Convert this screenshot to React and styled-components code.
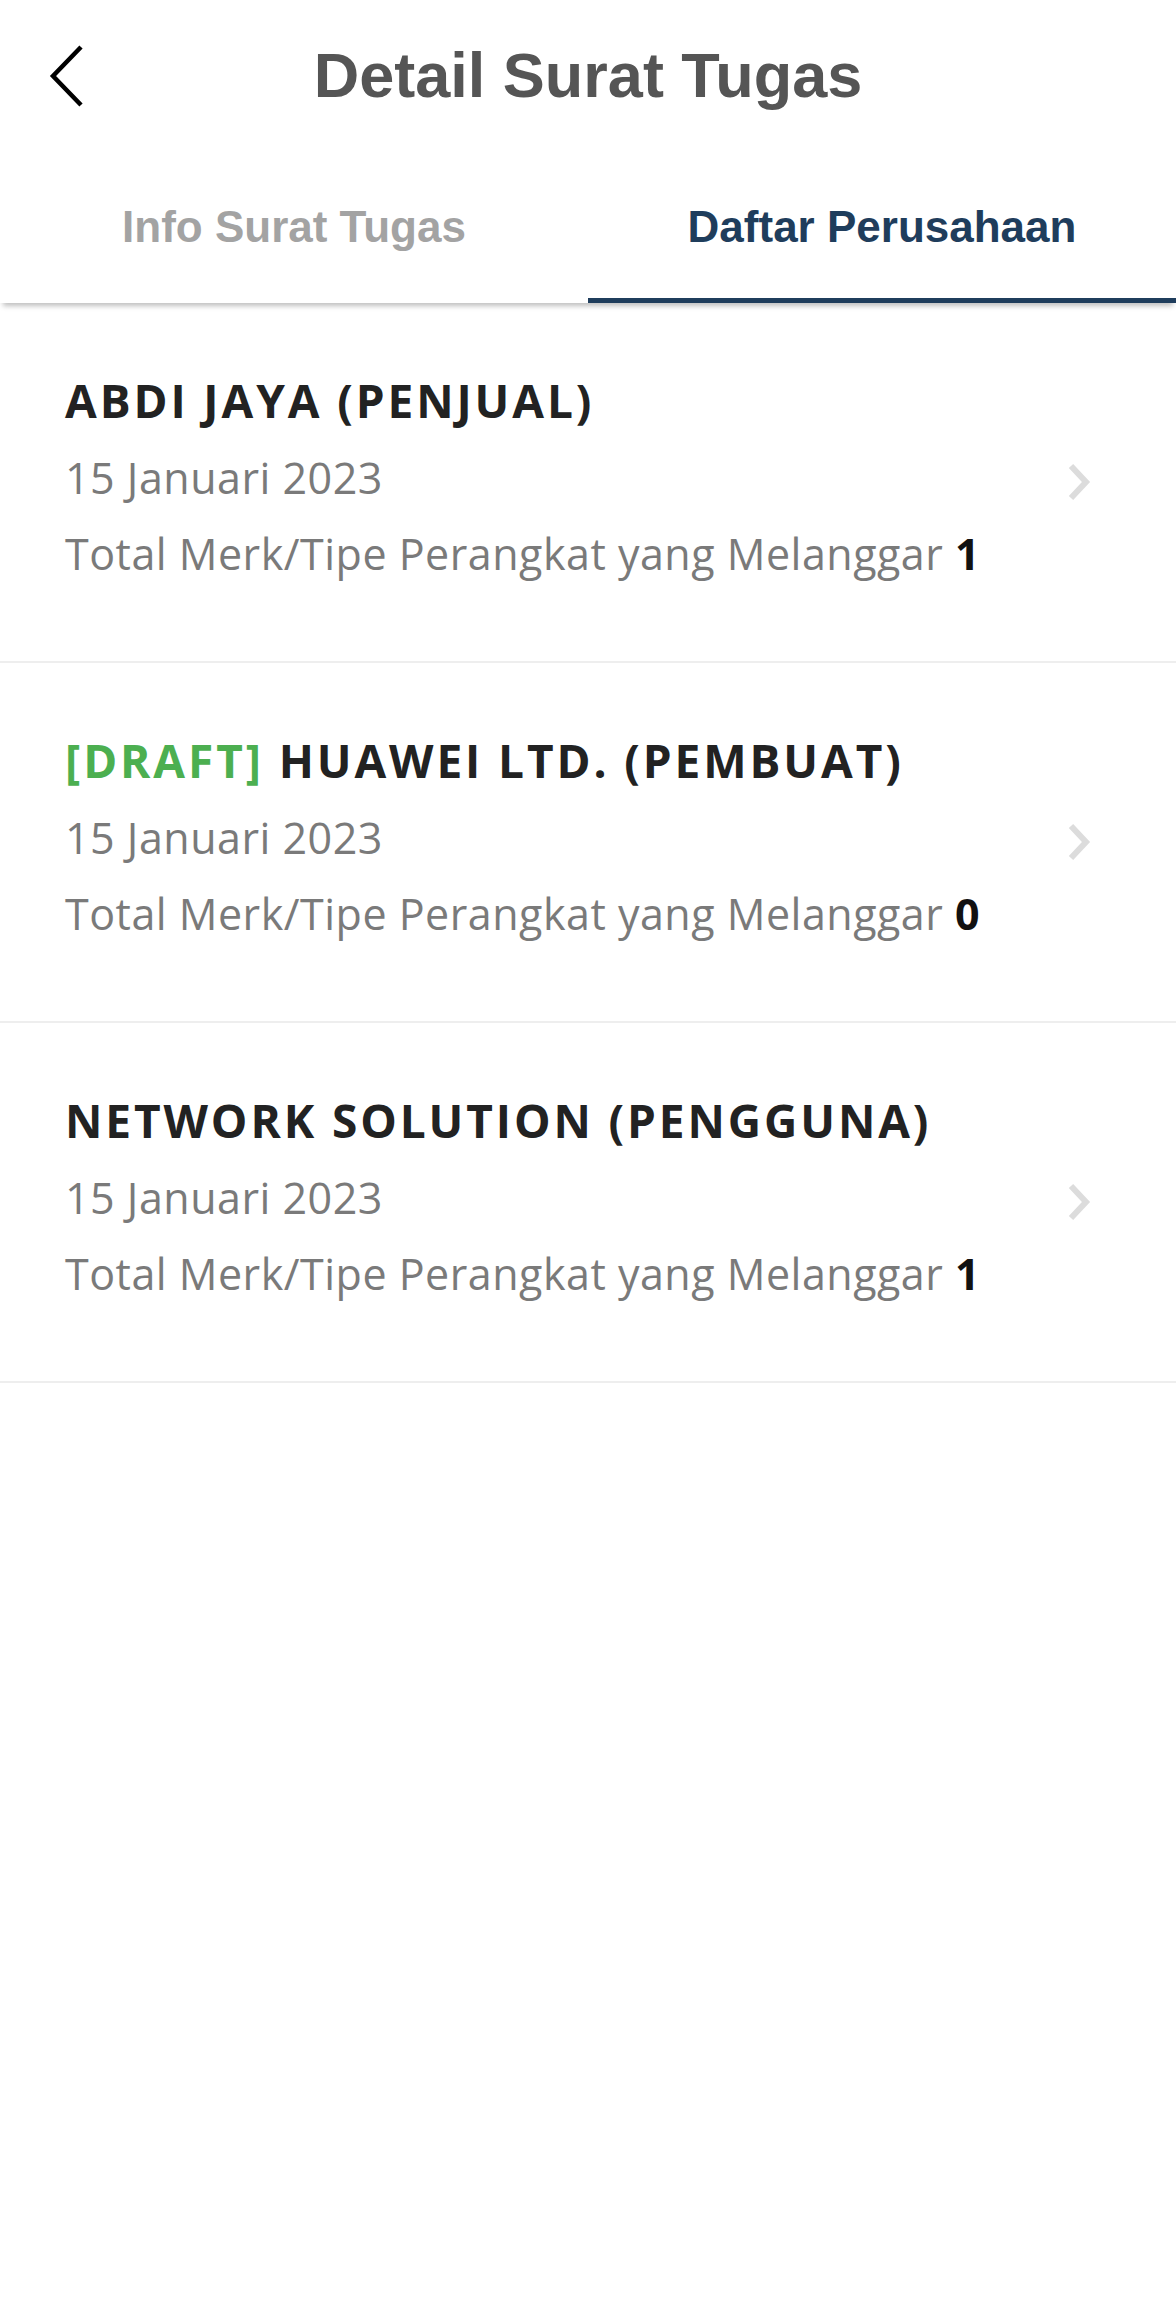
import React from 'react';
import styled, { createGlobalStyle } from 'styled-components';

const GlobalStyle = createGlobalStyle`
  html, body {
    margin: 0;
    padding: 0;
    background: #ffffff;
  }
  body {
    font-family: "Liberation Sans", Roboto, sans-serif;
  }
`;

const Page = styled.div`
  width: 1176px;
  min-height: 2306px;
  background: #ffffff;
`;

const TopBar = styled.header`
  position: relative;
  display: flex;
  align-items: center;
  justify-content: center;
  height: 150px;
`;

const BackButton = styled.button`
  position: absolute;
  left: 44px;
  top: 42px;
  width: 44px;
  height: 68px;
  padding: 0;
  border: none;
  background: none;
  display: flex;
  align-items: center;
  justify-content: center;
`;

const Title = styled.h1`
  margin: 0;
  font-family: "Liberation Sans", Roboto, sans-serif;
  font-weight: 700;
  font-size: 63px;
  color: #555555;
`;

const Tabs = styled.nav`
  position: relative;
  z-index: 1;
  display: flex;
  height: 153px;
  background: #ffffff;
  box-shadow: 0 6px 5px -3px rgba(0, 0, 0, 0.25);
`;

const Tab = styled.div`
  flex: 1;
  display: flex;
  align-items: center;
  justify-content: center;
  box-sizing: border-box;
  padding-top: 5px;
  border-bottom: 5px solid ${(p) => (p.$active ? '#1f3d5c' : 'transparent')};
  font-family: "Liberation Sans", Roboto, sans-serif;
  font-weight: 700;
  font-size: 44px;
  color: ${(p) => (p.$active ? '#1f3d5c' : '#a3a3a3')};
`;

const List = styled.div`
  display: flex;
  flex-direction: column;
`;

const Row = styled.div`
  display: flex;
  align-items: center;
  height: 360px;
  padding: 0 82px 0 65px;
  box-sizing: border-box;
  border-bottom: 2px solid #eeeeee;
`;

const RowBody = styled.div`
  flex: 1;
  display: flex;
  flex-direction: column;
  padding-bottom: 12px;
`;

const CompanyName = styled.div`
  font-family: "Open Sans", Lato, sans-serif;
  font-weight: 700;
  font-size: 46px;
  letter-spacing: 2.9px;
  line-height: 60px;
  color: #222222;
  margin-bottom: 20px;
`;

const Draft = styled.span`
  color: #4caf50;
`;

const Meta = styled.div`
  font-family: "Open Sans", Lato, sans-serif;
  font-weight: 400;
  font-size: 43px;
  letter-spacing: 0.5px;
  line-height: 56px;
  color: #7a7a7a;
  margin-bottom: ${(p) => p.$gap || 0}px;
`;

const Count = styled.strong`
  font-weight: 700;
  letter-spacing: 0;
  color: #111111;
`;

const Chevron = () => (
  <svg width="28" height="40" viewBox="0 0 28 40">
    <path d="M5 4 L20 20 L5 36" fill="none" stroke="#dcdcdc" strokeWidth="6" />
  </svg>
);

const companies = [
  { name: 'ABDI JAYA (PENJUAL)', date: '15 Januari 2023', total: 1 },
  { name: 'HUAWEI LTD. (PEMBUAT)', draft: true, date: '15 Januari 2023', total: 0 },
  { name: 'NETWORK SOLUTION (PENGGUNA)', date: '15 Januari 2023', total: 1 },
];

export default function App() {
  return (
    <Page>
      <GlobalStyle />
      <TopBar>
        <BackButton aria-label="Kembali">
          <svg width="40" height="62" viewBox="0 0 40 62">
            <path d="M35 2 L7 31 L35 60" fill="none" stroke="#000" strokeWidth="4.5" />
          </svg>
        </BackButton>
        <Title>Detail Surat Tugas</Title>
      </TopBar>
      <Tabs>
        <Tab>Info Surat Tugas</Tab>
        <Tab $active>Daftar Perusahaan</Tab>
      </Tabs>
      <List>
        {companies.map((c, key) => (
          <Row key={key}>
            <RowBody>
              <CompanyName>
                {c.draft && <Draft>[DRAFT] </Draft>}
                {c.name}
              </CompanyName>
              <Meta $gap={20}>{c.date}</Meta>
              <Meta>
                Total Merk/Tipe Perangkat yang Melanggar <Count>{c.total}</Count>
              </Meta>
            </RowBody>
            <Chevron />
          </Row>
        ))}
      </List>
    </Page>
  );
}
